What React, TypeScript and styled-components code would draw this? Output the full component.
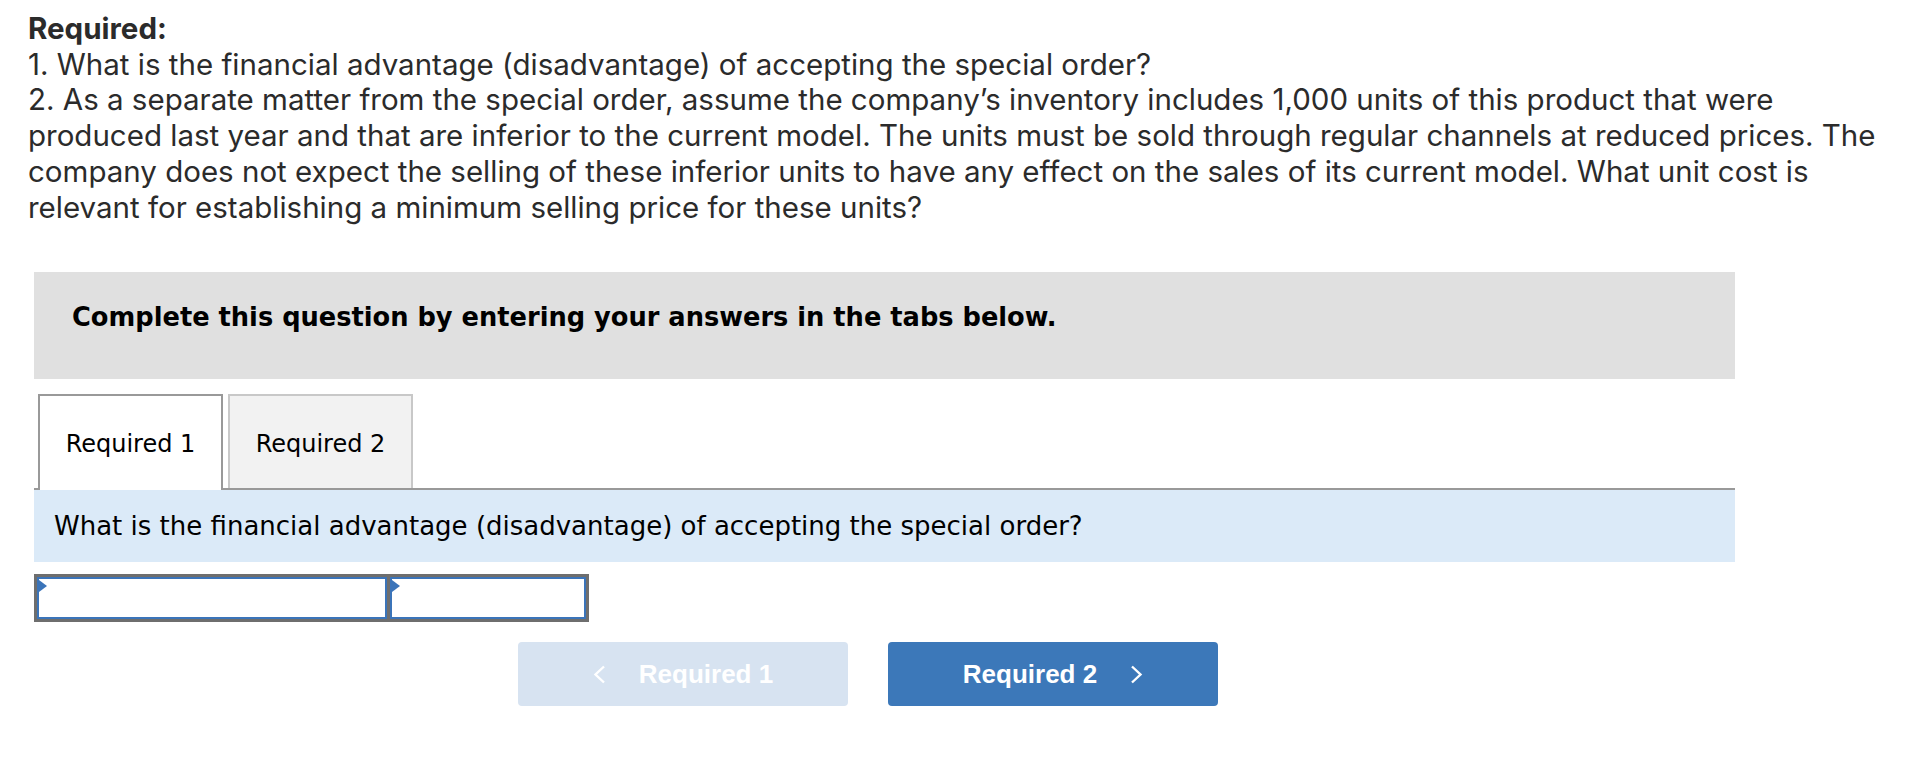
import React, { useState } from "react";
import styled, { createGlobalStyle } from "styled-components";

const GlobalStyle = createGlobalStyle`
  html, body {
    margin: 0;
    padding: 0;
    background: #ffffff;
  }
`;

const Page = styled.div`
  padding: 10px 28px 0 28px;
  box-sizing: border-box;
  width: 1930px;
`;

const Prompt = styled.div`
  font-family: Inter, "Open Sans", sans-serif;
  font-size: 29.5px;
  line-height: 35.7px;
  color: #2b2b2b;
  max-width: 1874px;
`;

const PromptTitle = styled.strong`
  display: block;
  font-weight: 700;
  line-height: 36.7px;
`;

const Workspace = styled.div`
  margin: 47px 0 0 6px;
  width: 1701px;
`;

const Instructions = styled.div`
  box-sizing: border-box;
  height: 107px;
  padding: 30px 38px 0;
  background: #e0e0e0;
  font-family: "DejaVu Sans", Verdana, sans-serif;
  font-weight: 700;
  font-size: 25.7px;
  color: #000;
`;

const TabBar = styled.div`
  display: flex;
  align-items: flex-start;
  gap: 5px;
  margin-top: 15px;
  padding-left: 4px;
  border-bottom: 2px solid #999999;
`;

const Tab = styled.div<{ $active?: boolean }>`
  box-sizing: border-box;
  width: 185px;
  height: ${(p) => (p.$active ? "96px" : "94px")};
  margin-bottom: ${(p) => (p.$active ? "-2px" : "0")};
  padding-top: 34px;
  display: flex;
  justify-content: center;
  border: 2px solid ${(p) => (p.$active ? "#999999" : "#c8c8c8")};
  border-bottom: none;
  background: ${(p) => (p.$active ? "#ffffff" : "#f2f2f2")};
  font-family: "DejaVu Sans", Verdana, sans-serif;
  font-size: 24px;
  color: #000;
  cursor: pointer;
`;

const QuestionBar = styled.div`
  box-sizing: border-box;
  height: 72px;
  padding: 21px 20px 0;
  background: #dbeaf8;
  font-family: "DejaVu Sans", Verdana, sans-serif;
  font-size: 26px;
  color: #000;
`;

const InputTable = styled.div`
  display: flex;
  gap: 3px;
  width: 555px;
  box-sizing: border-box;
  margin-top: 12px;
  padding: 3px;
  background: #6e6e6e;
`;

const Cell = styled.div<{ $width: number }>`
  position: relative;
  box-sizing: border-box;
  width: ${(p) => p.$width}px;
  height: 42px;
  border: 2px solid #3b74b9;
  background: #ffffff;

  &::before {
    content: "";
    position: absolute;
    top: 1px;
    left: 0;
    border-top: 6px solid transparent;
    border-bottom: 6px solid transparent;
    border-left: 8px solid #3b74b9;
  }
`;

const NavRow = styled.div`
  display: flex;
  gap: 40px;
  margin: 20px 0 0 484px;
`;

const NavButton = styled.button<{ $disabled?: boolean }>`
  box-sizing: border-box;
  width: 330px;
  height: 64px;
  display: flex;
  align-items: center;
  justify-content: center;
  gap: 33px;
  border: none;
  border-radius: 4px;
  background: ${(p) => (p.$disabled ? "#d7e3f1" : "#3c78b9")};
  color: #ffffff;
  font-family: "Liberation Sans", Arial, sans-serif;
  font-weight: 700;
  font-size: 26px;
  cursor: ${(p) => (p.$disabled ? "default" : "pointer")};
`;

const Chevron = ({ dir }: { dir: "left" | "right" }) => (
  <svg width="13" height="19" viewBox="0 0 13 19" fill="none">
    <polyline
      points={dir === "left" ? "11,1.5 2.5,9.5 11,17.5" : "2,1.5 10.5,9.5 2,17.5"}
      stroke="#ffffff"
      strokeWidth="2.4"
    />
  </svg>
);

export default function App() {
  const [tab, setTab] = useState(1);
  return (
    <Page>
      <GlobalStyle />
      <Prompt>
        <PromptTitle>Required:</PromptTitle>
        1. What is the financial advantage (disadvantage) of accepting the special order?
        <br />
        2. As a separate matter from the special order, assume the company’s inventory includes
        1,000 units of this product that were produced last year and that are inferior to the
        current model. The units must be sold through regular channels at reduced prices. The
        company does not expect the selling of these inferior units to have any effect on the
        sales of its current model. What unit cost is relevant for establishing a minimum selling
        price for these units?
      </Prompt>
      <Workspace>
        <Instructions>Complete this question by entering your answers in the tabs below.</Instructions>
        <TabBar>
          <Tab $active={tab === 1} onClick={() => setTab(1)}>
            Required 1
          </Tab>
          <Tab $active={tab === 2} onClick={() => setTab(2)}>
            Required 2
          </Tab>
        </TabBar>
        <QuestionBar>
          What is the financial advantage (disadvantage) of accepting the special order?
        </QuestionBar>
        <InputTable>
          <Cell $width={350} />
          <Cell $width={196} />
        </InputTable>
        <NavRow>
          <NavButton $disabled>
            <Chevron dir="left" />
            Required 1
          </NavButton>
          <NavButton onClick={() => setTab(2)}>
            Required 2
            <Chevron dir="right" />
          </NavButton>
        </NavRow>
      </Workspace>
    </Page>
  );
}
